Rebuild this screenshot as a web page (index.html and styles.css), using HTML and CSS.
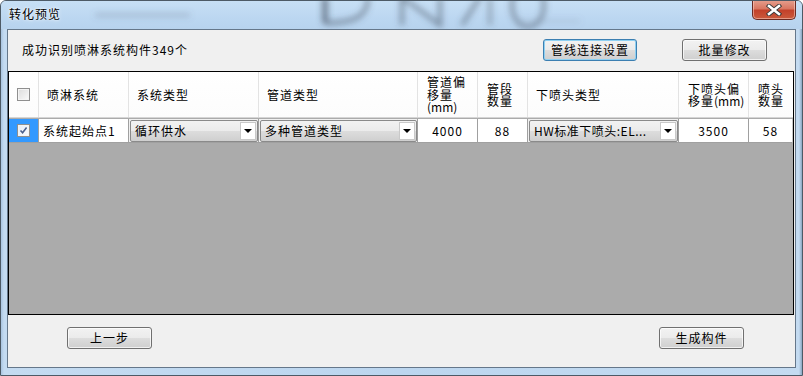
FILE: index.html
```html
<!DOCTYPE html>
<html lang="zh-CN">
<head>
<meta charset="utf-8">
<title>转化预览</title>
<link rel="stylesheet" href="styles.css">
</head>
<body>
<div class="window">
  <div class="titlebar">
    <svg class="glass" width="803" height="28" viewBox="0 0 803 28" aria-hidden="true">
      <defs><filter id="bl" x="-20%" y="-50%" width="140%" height="200%"><feGaussianBlur stdDeviation="3"/></filter></defs>
      <g filter="url(#bl)" fill="none" stroke="rgba(70,80,95,0.55)">
        <path d="M95 14 H190" stroke-width="3" stroke="rgba(90,100,115,0.35)"/>
        <path d="M325 -4 V22" stroke-width="5" stroke="rgba(60,70,85,0.7)"/>
        <path d="M325 22 C360 22 368 12 368 -4" stroke-width="4"/>
        <path d="M402 -4 V24" stroke-width="4"/>
        <path d="M402 -4 L440 24 V-4" stroke-width="4"/>
        <path d="M462 24 L480 -4" stroke-width="4"/>
        <path d="M490 24 V-4" stroke-width="3"/>
        <ellipse cx="528" cy="4" rx="16" ry="22" stroke-width="4"/>
        <path d="M520 20 H580" stroke-width="2" stroke="rgba(110,120,135,0.3)"/>
      </g>
    </svg>
    <span class="title">转化预览</span>
    <button class="close" aria-label="关闭">
      <svg width="18" height="12" viewBox="0 0 18 12">
        <path d="M4 2 L14 10 M14 2 L4 10" stroke="#3a3a3a" stroke-width="4.4" stroke-linecap="square"/>
        <path d="M4 2 L14 10 M14 2 L4 10" stroke="#ffffff" stroke-width="2.6" stroke-linecap="square"/>
      </svg>
    </button>
  </div>
  <div class="client">
    <div class="topbar">
      <span class="msg">成功识别喷淋系统构件349个</span>
      <button class="btn btn-conn">管线连接设置</button>
      <button class="btn btn-batch">批量修改</button>
    </div>
    <div class="grid">
      <div class="row head">
        <div class="cell c-check"><span class="checkbox"></span></div>
        <div class="cell"><span class="lbl">喷淋系统</span></div>
        <div class="cell"><span class="lbl">系统类型</span></div>
        <div class="cell"><span class="lbl">管道类型</span></div>
        <div class="cell multi"><span class="lbl">管道偏<br>移量<br><span class="mm">(mm)</span></span></div>
        <div class="cell multi"><span class="lbl">管段<br>数量</span></div>
        <div class="cell"><span class="lbl">下喷头类型</span></div>
        <div class="cell multi"><span class="lbl">下喷头偏<br>移量<span class="mm">(mm)</span></span></div>
        <div class="cell multi"><span class="lbl">喷头<br>数量</span></div>
      </div>
      <div class="row data">
        <div class="cell c-check sel"><span class="checkbox checked">
          <svg width="9" height="9" viewBox="0 0 9 9"><path d="M1.5 4.5 L3.6 6.8 L7.6 1.6" fill="none" stroke="#4a5f8c" stroke-width="1.6"/></svg>
        </span></div>
        <div class="cell text">系统起始点1</div>
        <div class="cell combo-cell">
          <div class="combo"><span class="combo-text">循环供水</span><span class="drop"><i></i></span></div>
        </div>
        <div class="cell combo-cell">
          <div class="combo"><span class="combo-text">多种管道类型</span><span class="drop"><i></i></span></div>
        </div>
        <div class="cell num">4000</div>
        <div class="cell num">88</div>
        <div class="cell combo-cell">
          <div class="combo"><span class="combo-text tight">HW标准下喷头:EL...</span><span class="drop"><i></i></span></div>
        </div>
        <div class="cell num">3500</div>
        <div class="cell num">58</div>
      </div>
      <div class="empty"></div>
    </div>
    <div class="bottombar">
      <button class="btn btn-prev">上一步</button>
      <button class="btn btn-gen">生成构件</button>
    </div>
  </div>
</div>
</body>
</html>
```

FILE: styles.css
```css
* { box-sizing: border-box; }
html, body { margin: 0; padding: 0; }
body {
  width: 803px;
  height: 376px;
  overflow: hidden;
  background: #ffffff;
  font-family: "Noto Sans CJK SC", "Noto Sans", sans-serif;
  font-size: 12px;
  color: #000;
}
.window {
  width: 803px;
  height: 376px;
  display: flex;
  flex-direction: column;
  border: 1px solid #4d5a66;
  border-radius: 6px 6px 0 0;
  background: linear-gradient(90deg, #a9c4e0 0px, #c4dbf1 3px, #bcd6ef 50%, #c4dbf1 calc(100% - 3px), #8aa6c2 100%);
  overflow: hidden;
}
.titlebar {
  position: relative;
  height: 28px;
  flex: none;
  overflow: hidden;
  background: linear-gradient(180deg, #c7dff5 0%, #bcd7f1 60%, #b7d3ee 100%);
}
.glass {
  position: absolute;
  left: -1px;
  top: 0;
}
.title {
  position: absolute;
  left: 8px;
  top: 5px;
  line-height: 16px;
  letter-spacing: 1px;
  text-shadow: 0 0 4px rgba(255,255,255,0.9), 0 0 2px rgba(255,255,255,0.9);
}
.close {
  position: absolute;
  right: 6px;
  top: -1px;
  width: 44px;
  height: 20px;
  border: 1px solid #6b2a22;
  border-top: none;
  border-radius: 0 0 5px 5px;
  padding: 0;
  display: flex;
  align-items: center;
  justify-content: center;
  background: linear-gradient(180deg, #e6a08f 0%, #d97762 45%, #c3412a 55%, #cb5a3c 100%);
  box-shadow: inset 0 0 0 1px rgba(255,220,210,0.5);
}
.client {
  flex: 1;
  margin: 0 6px 7px 6px;
  border: 1px solid #65778a;
  background: #f0f0f0;
  display: flex;
  flex-direction: column;
}
.topbar {
  height: 41px;
  flex: none;
  display: flex;
  align-items: center;
  padding: 0 0 2px 14px;
}
.msg {
  letter-spacing: 1px;
  line-height: 14px;
}
.btn {
  font-family: inherit;
  font-size: 12px;
  letter-spacing: 1px;
  color: #000;
  height: 22px;
  padding: 0;
  border: 1px solid #707070;
  border-radius: 3px;
  background: linear-gradient(180deg, #f2f2f2 0%, #ebebeb 49%, #dddddd 50%, #cfcfcf 100%);
  box-shadow: inset 0 0 0 1px rgba(255,255,255,0.7);
  line-height: 18px;
}
.btn-conn {
  margin-left: auto;
  width: 94px;
  border-color: #3c7fb1;
  box-shadow: inset 0 0 0 1px #8ed0f2;
}
.btn-batch { margin-left: 45px; margin-right: 28px; width: 85px; }
.grid {
  flex: none;
  height: 244px;
  margin-right: 1px;
  border: 1px solid #000;
  background: #ababab;
  display: flex;
  flex-direction: column;
}
.row {
  display: grid;
  grid-template-columns: 30px 90px 130px 159px 60px 50px 151px 70px 1fr;
}
.head {
  height: 46px;
  background: linear-gradient(180deg, #ffffff 0%, #fcfcfc 100%);
  border-bottom: 1px solid #d5d5d5;
}
.head .cell {
  display: flex;
  align-items: center;
  padding-left: 8px;
  border-right: 1px solid #e3e3e3;
  letter-spacing: 1px;
  line-height: 14px;
}
.head .cell:last-child { border-right: none; }
.lbl { display: block; white-space: nowrap; }
.head .multi {
  line-height: 12.5px;
  padding-left: 9px;
}
.head .multi .lbl { padding-top: 1px; }
.mm { letter-spacing: 0; }
.head .c-check { padding-left: 0; justify-content: center; }
.checkbox {
  display: inline-flex;
  align-items: center;
  justify-content: center;
  width: 13px;
  height: 13px;
  border: 1px solid #8f8f8f;
  background: linear-gradient(135deg, #dcdcdc 0%, #f4f4f4 80%, #ffffff 100%);
  box-shadow: inset 0 0 0 1px #f4f4f4;
}
.checkbox.checked {
  background: linear-gradient(135deg, #e8edf5 0%, #f8faff 100%);
  border-color: #8e8f8f;
}
.data {
  height: 24px;
  background: #ffffff;
  margin-top: 1px;
}
.data .cell {
  border-right: 1px solid #a0a0a0;
  border-bottom: 1px solid #a0a0a0;
  display: flex;
  align-items: center;
  letter-spacing: 1px;
  line-height: 14px;
  background: #ffffff;
}
.data .cell:last-child { border-right: 1px solid #c8c8c8; }
.data .sel {
  background: #3399ff;
  justify-content: center;
}
.data .text { padding-left: 4px; }
.data .num { justify-content: center; }
.data .combo-cell { padding: 0 0 0 1px; background: #f0f0f0; }
.combo {
  flex: 1;
  height: 22px;
  display: flex;
  align-items: stretch;
  border: 1px solid #8a8a8a;
  border-radius: 2px;
  background: linear-gradient(180deg, #f2f2f2 0%, #ebebeb 49%, #dddddd 50%, #cfcfcf 100%);
}
.combo-text {
  flex: 1;
  padding-left: 4px;
  display: flex;
  align-items: center;
  white-space: nowrap;
  overflow: hidden;
}
.tight { letter-spacing: 0.5px; }
.drop {
  width: 16px;
  flex: none;
  margin: 1px 1px 1px 0;
  background: #ffffff;
  border: 1px solid #c9c9c9;
  display: flex;
  align-items: center;
  justify-content: center;
}
.drop i {
  display: block;
  width: 0;
  height: 0;
  border-left: 4px solid transparent;
  border-right: 4px solid transparent;
  border-top: 4px solid #000;
}
.empty { flex: 1; background: #ababab; }
.bottombar {
  flex: 1;
  display: flex;
  align-items: flex-start;
  padding: 12px 0 0 59px;
}
.btn-prev { width: 85px; }
.btn-gen { width: 85px; margin-left: auto; margin-right: 51px; }
```
